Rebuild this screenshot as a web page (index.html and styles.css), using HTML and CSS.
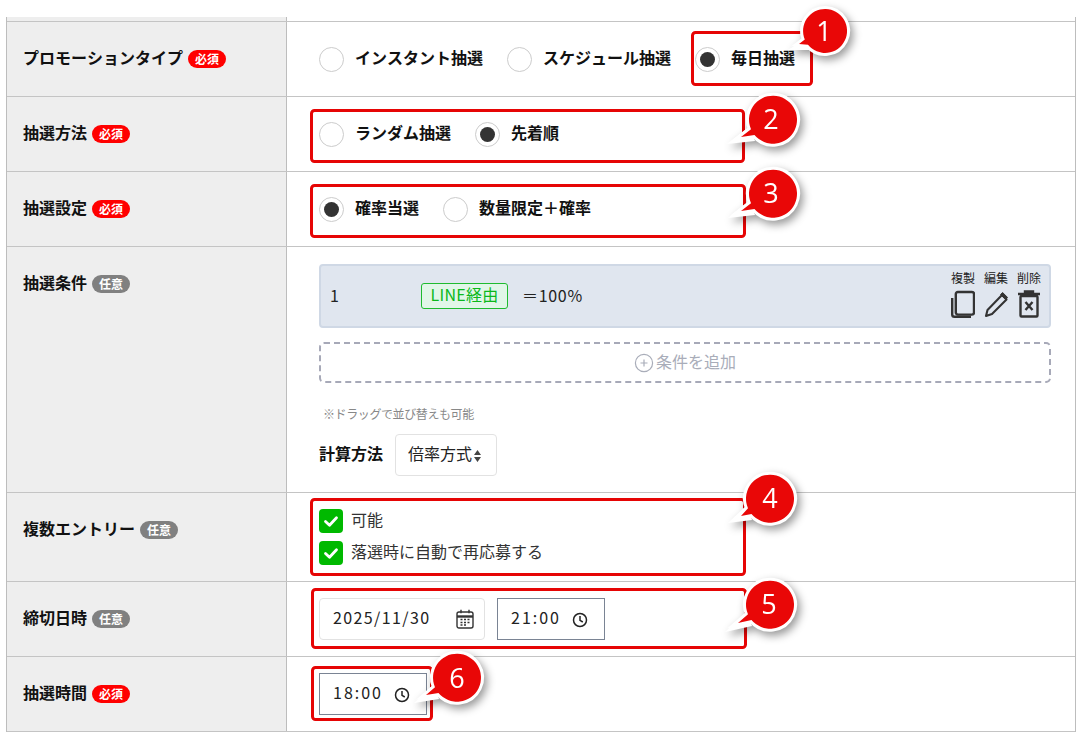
FILE: index.html
```html
<!DOCTYPE html>
<html lang="ja">
<head>
<meta charset="utf-8">
<title>抽選設定</title>
<link rel="stylesheet" href="styles.css">
</head>
<body>
<div class="form">
  <div class="row stub"><div class="head"></div><div class="cell"></div></div>

  <div class="row">
    <div class="head"><span class="label">プロモーションタイプ</span><span class="badge req">必須</span></div>
    <div class="cell radios">
      <label class="radio"><i class="dot"></i><span class="txt">インスタント抽選</span></label>
      <label class="radio"><i class="dot"></i><span class="txt">スケジュール抽選</span></label>
      <label class="radio on"><i class="dot"></i><span class="txt">毎日抽選</span></label>
    </div>
  </div>

  <div class="row">
    <div class="head"><span class="label">抽選方法</span><span class="badge req">必須</span></div>
    <div class="cell radios">
      <label class="radio"><i class="dot"></i><span class="txt">ランダム抽選</span></label>
      <label class="radio on"><i class="dot"></i><span class="txt">先着順</span></label>
    </div>
  </div>

  <div class="row">
    <div class="head"><span class="label">抽選設定</span><span class="badge req">必須</span></div>
    <div class="cell radios">
      <label class="radio on"><i class="dot"></i><span class="txt">確率当選</span></label>
      <label class="radio"><i class="dot"></i><span class="txt">数量限定＋確率</span></label>
    </div>
  </div>

  <div class="row">
    <div class="head"><span class="label">抽選条件</span><span class="badge opt">任意</span></div>
    <div class="cell conditions">
      <div class="card">
        <span class="num">1</span>
        <span class="tag">LINE経由</span>
        <span class="rate">＝100%</span>
        <div class="actions">
          <div class="action"><span>複製</span>
            <svg class="act-icon" viewBox="0 0 24 28"><rect x="4.8" y="2" width="18.2" height="22.6" rx="2"/><path d="M1.2 8v16.5a2.3 2.3 0 0 0 2.3 2.3H20"/></svg>
          </div>
          <div class="action"><span>編集</span>
            <svg class="act-icon" viewBox="0 0 24 28"><path d="M2 26l1.5-6L18 5l4.5 4.5L8 24z" class="thin"/><path d="M18.6 2.5l5 5-2 2-5-5z" class="solid"/></svg>
          </div>
          <div class="action"><span>削除</span>
            <svg class="act-icon" viewBox="0 0 24 28"><path d="M1 4h22M8 3V1.5h8V3" /><rect x="3.5" y="6" width="17" height="20.5" rx="1"/><path d="M8.5 12l7 8M15.5 12l-7 8"/></svg>
          </div>
        </div>
      </div>
      <div class="add">
        <svg class="plus" viewBox="0 0 20 20"><circle cx="10" cy="10" r="8.6"/><path d="M10 6.5v7M6.5 10h7"/></svg><span class="txt-s">条件を追加</span>
      </div>
      <p class="note">※ドラッグで並び替えも可能</p>
      <div class="calc">
        <span class="calc-label txt-s">計算方法</span>
        <div class="select"><span class="txt-s">倍率方式</span><svg class="updown" viewBox="0 0 9 14"><path d="M4.5 1L8 6H1zM4.5 13L1 8h7z"/></svg></div>
      </div>
    </div>
  </div>

  <div class="row">
    <div class="head"><span class="label">複数エントリー</span><span class="badge opt">任意</span></div>
    <div class="cell checks">
      <label class="check"><i class="box"><svg viewBox="0 0 24 24"><path d="M6.5 12.5l4 3.8 7-7.6"/></svg></i><span class="txt-s">可能</span></label>
      <label class="check"><i class="box"><svg viewBox="0 0 24 24"><path d="M6.5 12.5l4 3.8 7-7.6"/></svg></i><span class="txt-s">落選時に自動で再応募する</span></label>
    </div>
  </div>

  <div class="row">
    <div class="head"><span class="label">締切日時</span><span class="badge opt">任意</span></div>
    <div class="cell inputs">
      <div class="field date"><span class="txt-s">2025/11/30</span>
        <svg class="cal" viewBox="0 0 18 20"><rect x="1" y="3" width="16" height="16" rx="2"/><path d="M1 7.5h16" class="fat"/><path d="M5 .8v3.4M13 .8v3.4"/><path d="M4.5 10.5h2M8 10.5h2M11.5 10.5h2M4.5 13.5h2M8 13.5h2M11.5 13.5h2M4.5 16h2M8 16h2" /></svg>
      </div>
      <div class="field time"><span class="txt-s">21:00</span>
        <svg class="clock" viewBox="0 0 16 16"><circle cx="8" cy="8" r="6.5"/><path d="M8 4v4.3l2.8 1.7"/></svg>
      </div>
    </div>
  </div>

  <div class="row">
    <div class="head"><span class="label">抽選時間</span><span class="badge req">必須</span></div>
    <div class="cell inputs">
      <div class="field time"><span class="txt-s">18:00</span>
        <svg class="clock" viewBox="0 0 16 16"><circle cx="8" cy="8" r="6.5"/><path d="M8 4v4.3l2.8 1.7"/></svg>
      </div>
    </div>
  </div>
</div>

<svg class="notes" viewBox="0 0 1085 739" width="1085" height="739">
  <rect class="frame" x="692.5" y="32.5" width="119" height="52" rx="3"/>
  <rect class="frame" x="311.5" y="110.5" width="432" height="51" rx="3"/>
  <rect class="frame" x="311.5" y="185.5" width="433" height="51" rx="3"/>
  <rect class="frame" x="311.5" y="499.5" width="433" height="75" rx="3"/>
  <rect class="frame" x="312.5" y="589.5" width="433" height="58" rx="3"/>
  <rect class="frame" x="312.5" y="667.5" width="119" height="52" rx="3"/>

  <g class="callout">
    <polygon class="tip" points="788,50 808,37 812,50"/>
    <path class="disc" d="M799 44L804.8 39.5A22 22 0 1 1 808 44.8z"/><text x="824" y="41">1</text>
  </g>
  <g class="callout">
    <polygon class="tip" points="727,144 750,126 755,141"/>
    <path class="disc" d="M741 137L751 129.3A24 24 0 1 1 754.5 135z"/><text x="771" y="129">2</text>
  </g>
  <g class="callout">
    <polygon class="tip" points="728,218 750,200 755,215"/>
    <path class="disc" d="M741 211L751 203.3A24 24 0 1 1 754.5 209z"/><text x="771" y="203">3</text>
  </g>
  <g class="callout">
    <polygon class="tip" points="728,523 747,505 752,520"/>
    <path class="disc" d="M741 516L748 508.3A24 24 0 1 1 751.5 514z"/><text x="770" y="508">4</text>
  </g>
  <g class="callout">
    <polygon class="tip" points="725,632 747,611 752,626"/>
    <path class="disc" d="M738 623L748 614.3A24 24 0 1 1 751.5 620z"/><text x="769" y="614">5</text>
  </g>
  <g class="callout">
    <polygon class="tip" points="414,703 434,684 439,699"/>
    <path class="disc" d="M426 695L435 687.3A24 24 0 1 1 438.5 693z"/><text x="457" y="688">6</text>
  </g>
</svg>
</body>
</html>
```
FILE: styles.css
```css
html, body { margin: 0; padding: 0; background: #fff; }
body {
  position: relative;
  width: 1085px;
  height: 739px;
  overflow: hidden;
  font-family: "Noto Sans CJK JP", "Noto Sans", sans-serif;
  font-size: 16px;
  font-kerning: none;
  color: #222;
}
i { font-style: normal; }

.form {
  width: 1070px;
  margin: 17px 0 0 6px;
  box-sizing: border-box;
  border-left: 1px solid #bdbdbd;
  border-right: 1px solid #bdbdbd;
}
.row {
  display: grid;
  grid-template-columns: 280px 1fr;
  border-bottom: 1px solid #c4c4c4;
}
.stub { height: 4px; }
.head {
  background: #eee;
  border-right: 1px solid #bdbdbd;
  padding: 23px 0 0 16px;
  display: flex;
  align-items: flex-start;
  gap: 5px;
}
.stub .head { padding: 0; }
.label {
  font-size: 16px;
  line-height: 24px;
  font-weight: 700;
  color: #111;
}
.badge {
  margin-top: 5px;
  width: 38px;
  height: 18px;
  border-radius: 9px;
  color: #fff;
  font-size: 12px;
  line-height: 17px;
  font-weight: 700;
  text-align: center;
}
.req { background: #f00; }
.opt { background: #808080; }

.cell { padding-left: 32px; }
.txt { padding-bottom: 5px; }
.txt-s { padding-bottom: 4px; }

.radios {
  display: flex;
  align-items: center;
  gap: 24px;
  height: 74px;
  padding-top: 1px;
  box-sizing: border-box;
}
.radio {
  display: flex;
  align-items: center;
  gap: 11px;
  font-size: 16px;
  line-height: 24px;
  font-weight: 700;
  color: #111;
}
.dot {
  width: 25px;
  height: 25px;
  box-sizing: border-box;
  border: 1px solid #ccc;
  border-radius: 50%;
  background: #fff;
  display: flex;
  align-items: center;
  justify-content: center;
}
.on .dot::after {
  content: "";
  width: 15px;
  height: 15px;
  border-radius: 50%;
  background: #333;
}

.conditions {
  padding: 17px 24px 16px 32px;
}
.card {
  height: 64px;
  box-sizing: border-box;
  background: #e0e6ef;
  border: 2px solid #cfd8e5;
  border-radius: 4px;
  display: flex;
  align-items: center;
  padding: 0 8px 0 9px;
}
.num { width: 91px; line-height: 24px; padding-bottom: 3px; }
.tag {
  width: 87px;
  height: 26px;
  box-sizing: border-box;
  border: 1px solid #1fbb2f;
  border-radius: 3px;
  background: #e1f6e8;
  color: #0cb81c;
  font-size: 16px;
  line-height: 20px;
  letter-spacing: .3px;
  text-align: center;
  margin-bottom: 1px;
}
.rate {
  margin-left: 14px;
  line-height: 24px;
  letter-spacing: .7px;
  padding-bottom: 3px;
}
.actions {
  margin-left: auto;
  display: flex;
  gap: 9px;
  margin-bottom: 3px;
}
.action {
  width: 24px;
  display: flex;
  flex-direction: column;
  align-items: center;
  gap: 5px;
  font-size: 12px;
  line-height: 14px;
  color: #222;
}
.act-icon {
  display: block;
  width: 24px;
  height: 28px;
  fill: none;
  stroke: #333;
  stroke-width: 2.4;
}
.act-icon .thin { stroke-width: 2.1; stroke-linejoin: round; }
.act-icon .solid { fill: #333; stroke: #333; stroke-width: 1; }

.add {
  margin-top: 14px;
  height: 41px;
  box-sizing: border-box;
  border: 2px dashed #a7a9b8;
  border-radius: 5px;
  display: flex;
  align-items: center;
  justify-content: center;
  gap: 2px;
  color: #a9adb9;
  font-size: 16px;
}
.plus {
  width: 20px;
  height: 20px;
  fill: none;
  stroke: #a9adb9;
  stroke-width: 1.2;
}
.note {
  margin: 22px 0 0 4px;
  font-size: 12px;
  line-height: 18px;
  color: #888;
  letter-spacing: -.4px;
}
.calc {
  margin-top: 11px;
  display: flex;
  align-items: center;
  gap: 12px;
}
.calc-label {
  font-weight: 700;
  font-size: 16px;
  color: #111;
}
.select {
  width: 102px;
  height: 42px;
  box-sizing: border-box;
  border: 1px solid #e2e2e2;
  border-radius: 4px;
  padding-left: 12px;
  display: flex;
  align-items: center;
  gap: 1px;
  font-size: 16px;
  color: #222;
}
.updown { width: 9px; height: 14px; fill: #444; margin-top: 2px; }

.checks {
  padding: 16px 0 16px 32px;
  display: flex;
  flex-direction: column;
  gap: 8px;
}
.check {
  display: flex;
  align-items: center;
  gap: 8px;
  height: 24px;
  font-size: 16px;
  color: #333;
}
.box {
  width: 24px;
  height: 24px;
  border-radius: 4px;
  background: #00b900;
  display: block;
}
.box svg {
  display: block;
  width: 24px;
  height: 24px;
  fill: none;
  stroke: #fff;
  stroke-width: 2.8;
  stroke-linecap: round;
  stroke-linejoin: round;
}

.inputs {
  padding: 16px 0 16px 32px;
  display: flex;
  gap: 12px;
}
.field {
  height: 42px;
  box-sizing: border-box;
  display: flex;
  align-items: center;
  justify-content: space-between;
  font-size: 16px;
  color: #222;
}
.date {
  width: 166px;
  border: 1px solid #e2e2e2;
  border-radius: 4px;
  padding: 0 10px 0 13px;
  letter-spacing: 1.4px;
}
.time {
  width: 108px;
  border: 1px solid #7a8494;
  padding: 0 16px 0 13px;
  letter-spacing: 2px;
}
.cal {
  width: 18px;
  height: 20px;
  fill: none;
  stroke: #333;
  stroke-width: 1.4;
}
.cal .fat { stroke-width: 2.4; }
.clock {
  width: 16px;
  height: 16px;
  fill: none;
  stroke: #222;
  stroke-width: 1.5;
  margin-top: 2px;
}

.notes {
  position: absolute;
  left: 0;
  top: 0;
  pointer-events: none;
}
.frame {
  fill: none;
  stroke: #e60505;
  stroke-width: 3;
}
.callout {
  filter: drop-shadow(3px 4px 4px rgba(0, 0, 0, .4));
}
.callout .tip { fill: #fff; }
.callout .disc {
  fill: #e90707;
  stroke: #fff;
  stroke-width: 6;
  stroke-linejoin: miter;
  stroke-miterlimit: 8;
  paint-order: stroke;
}
.callout text {
  font-family: "Open Sans", "Noto Sans", sans-serif;
  font-size: 27px;
  fill: #fff;
  text-anchor: middle;
}
```
